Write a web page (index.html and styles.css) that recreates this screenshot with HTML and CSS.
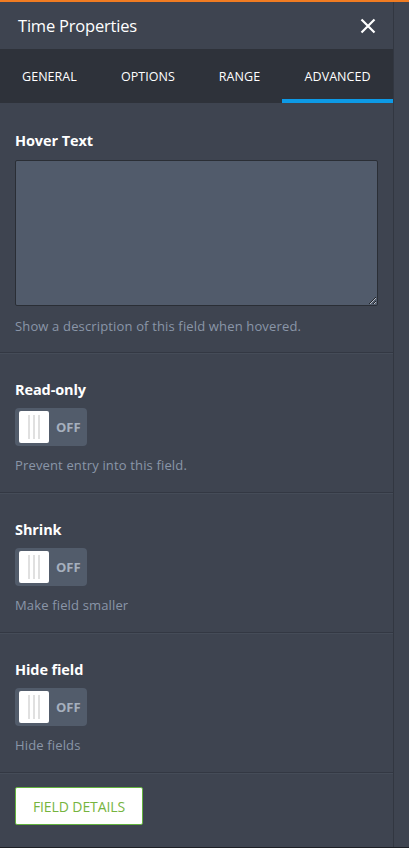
FILE: index.html
```html
<!DOCTYPE html>
<html lang="en">
<head>
    <meta charset="UTF-8">
    <meta name="viewport" content="width=device-width, initial-scale=1.0">
    <title>Time Properties</title>
    <link rel="stylesheet" href="styles.css">
</head>
<body>
    <div class="wrap">
        <div class="panel">
            <div class="header">
                <span class="title">Time Properties</span>
                <svg class="close" width="16" height="16" viewBox="0 0 16 16">
                    <path d="M1.5 1.5 L14.5 14.5 M14.5 1.5 L1.5 14.5" stroke="#fff" stroke-width="2.2" fill="none"/>
                </svg>
            </div>
            <div class="tabs">
                <div class="tab">General</div>
                <div class="tab">Options</div>
                <div class="tab">Range</div>
                <div class="tab active">Advanced</div>
            </div>

            <div class="section first">
                <label class="label" for="hover">Hover Text</label>
                <textarea id="hover" class="text"></textarea>
                <p class="desc">Show a description of this field when hovered.</p>
            </div>

            <div class="section">
                <div class="label">Read-only</div>
                <div class="toggle"><span class="knob"><i></i><i></i><i></i></span><span class="off">OFF</span></div>
                <p class="desc">Prevent entry into this field.</p>
            </div>

            <div class="section">
                <div class="label">Shrink</div>
                <div class="toggle"><span class="knob"><i></i><i></i><i></i></span><span class="off">OFF</span></div>
                <p class="desc">Make field smaller</p>
            </div>

            <div class="section">
                <div class="label">Hide field</div>
                <div class="toggle"><span class="knob"><i></i><i></i><i></i></span><span class="off">OFF</span></div>
                <p class="desc">Hide fields</p>
            </div>

            <div class="section last">
                <button class="details">FIELD DETAILS</button>
            </div>
        </div>
        <div class="strip"></div>
    </div>
</body>
</html>
```

FILE: styles.css
```css
body {
    margin: 0;
    font-family: "Open Sans", "Noto Sans", sans-serif;
    background-color: #3e4450;
}
.wrap {
    display: flex;
    height: 848px;
    border-top: 2px solid #f07c22;
    border-bottom: 1px solid #1d2026;
    box-sizing: border-box;
}
.panel {
    width: 393px;
    border-right: 1px solid #323741;
    background-color: #3e4450;
}
.strip {
    flex: 1;
    background-color: #3e4450;
}
.header {
    height: 47px;
    display: flex;
    align-items: center;
    justify-content: space-between;
    padding: 0 17px 0 18px;
}
.title {
    color: #fff;
    font-size: 16.5px;
    letter-spacing: -0.2px;
}
.close {
    margin-top: 1px;
}
.tabs {
    display: flex;
    background-color: #2e323a;
    height: 54px;
}
.tab {
    padding: 0 22px;
    color: #fff;
    font-size: 12.5px;
    text-transform: uppercase;
    letter-spacing: 0.05px;
    display: flex;
    align-items: center;
    padding-top: 4px;
    border-bottom: 4px solid transparent;
}
.tab.active {
    flex: 1;
    justify-content: center;
    border-bottom-color: #0d9ae6;
}
.section {
    border-top: 1px solid #333843;
    box-shadow: inset 0 1px 0 #454c58;
    height: 140px;
    box-sizing: border-box;
    padding: 27px 15px 0;
}
.section.first {
    border-top: none;
    box-shadow: none;
    height: 249px;
    padding-top: 28px;
}
.section.last {
    height: 74px;
    padding-top: 14px;
}
.label {
    display: block;
    color: #fff;
    font-weight: bold;
    font-size: 14.5px;
    letter-spacing: -0.1px;
    margin-bottom: 9px;
}
.first .label {
    margin-bottom: 10px;
}
.text {
    display: block;
    width: 363px;
    height: 146px;
    box-sizing: border-box;
    background-color: #515b6b;
    border: 1px solid #2a2e35;
    border-radius: 2px;
    margin: 0;
}
.desc {
    color: #8a96a8;
    font-size: 13px;
    letter-spacing: 0.15px;
    margin: 10px 0 0;
}
.first .desc {
    margin-top: 11px;
}
.toggle {
    width: 72px;
    height: 38px;
    box-sizing: border-box;
    background-color: #525c6b;
    border-radius: 4px;
    display: flex;
    align-items: center;
    padding-left: 4px;
}
.knob {
    width: 30px;
    height: 32px;
    background-color: #fff;
    border-radius: 2px;
    display: flex;
    justify-content: center;
    gap: 3px;
    align-items: center;
}
.knob i {
    width: 2px;
    height: 24px;
    background-color: #e0e0e0;
}
.off {
    color: #a6b0be;
    font-weight: bold;
    font-size: 13px;
    margin-left: 7px;
}
.details {
    width: 128px;
    height: 38px;
    background-color: #fff;
    border: 1px solid #63b23e;
    border-radius: 2px;
    color: #76b43e;
    font-family: "Open Sans", sans-serif;
    font-size: 14px;
    letter-spacing: -0.1px;
    padding: 0;
    cursor: pointer;
}
```
